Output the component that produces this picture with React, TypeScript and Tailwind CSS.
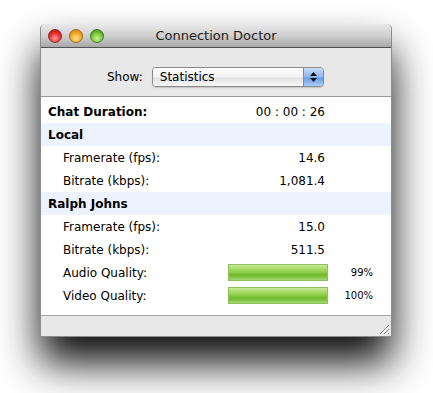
import React from "react";

const font = { fontFamily: '"DejaVu Sans", "Lucida Grande", sans-serif' };

function Bar() {
  return (
    <div className="h-[17px] w-[100px] border border-[#8fbf5a] bg-[linear-gradient(to_bottom,#c6e89a_0%,#a9db6b_25%,#8ccc45_50%,#6fb82c_65%,#86c74a_85%,#a6d977_100%)]" />
  );
}

function Row({
  label,
  value,
  bold,
  indent,
  band,
  bar,
  pct,
}: {
  label: string;
  value?: string;
  bold?: boolean;
  indent?: boolean;
  band?: boolean;
  bar?: boolean;
  pct?: string;
}) {
  return (
    <div
      className={`flex h-[23px] items-center ${band ? "bg-[#edf3fe]" : ""}`}
    >
      <div
        className={`${indent ? "pl-[22px]" : "pl-[7px]"} w-[179px] text-[12px] text-black ${bold ? "font-bold" : ""}`}
      >
        {label}
      </div>
      {value !== undefined && (
        <div className="w-[105px] text-right text-[12px] text-black">{value}</div>
      )}
      {bar && (
        <div className="flex items-center">
          <div className="ml-[8px]">
            <Bar />
          </div>
          <div className="w-[45px] text-right text-[10px] text-black">{pct}</div>
        </div>
      )}
    </div>
  );
}

export default function App() {
  return (
    <div className="h-[393px] w-[433px] bg-white pl-[40px] pt-[24px]" style={font}>
      <div className="flex h-[313px] w-[352px] flex-col rounded-t-[5px] border-x border-b border-[#8c8c8c] bg-[#e8e8e8] shadow-[0_26px_40px_rgba(0,0,0,0.95)]">
        {/* title bar */}
        <div className="relative flex h-[24px] items-center rounded-t-[5px] border-b border-[#515151] bg-[linear-gradient(to_bottom,#e9e9e9,#d0d0d0_50%,#a8a8a8)]">
          <div className="flex gap-[7px] pl-[7px]">
            <div className="h-[14px] w-[14px] rounded-full border border-[#8a2a2a] bg-[radial-gradient(circle_at_50%_70%,#ff9a9a,#e52a2a_55%,#a90f0f)]" />
            <div className="h-[14px] w-[14px] rounded-full border border-[#9a6a1a] bg-[radial-gradient(circle_at_50%_70%,#ffe08a,#f5a623_55%,#c7700d)]" />
            <div className="h-[14px] w-[14px] rounded-full border border-[#3f7a1c] bg-[radial-gradient(circle_at_50%_70%,#c9f58e,#72c23a_55%,#3d8a16)]" />
          </div>
          <div className="absolute inset-0 flex items-center justify-center text-[13px] text-[#1a1a1a]">
            Connection Doctor
          </div>
        </div>
        {/* toolbar */}
        <div className="flex h-[49px] items-center border-b border-[#9a9a9a] pl-[66px] pt-[9px]">
          <span className="mr-[9px] text-[12px] text-black">Show:</span>
          <div className="flex h-[20px] w-[172px] overflow-hidden rounded-[4px] border border-[#8a8a8a] shadow-[0_1px_1px_rgba(0,0,0,0.15)]">
            <div className="flex flex-1 items-center bg-[linear-gradient(to_bottom,#ffffff,#f1f1f1_50%,#e2e2e2_55%,#f7f7f7)] pl-[7px] text-[12px] text-black">
              Statistics
            </div>
            <div className="flex w-[20px] flex-col items-center justify-center gap-[2px] border-l border-[#6f8fc0] bg-[linear-gradient(to_bottom,#c9dcf5,#8fb5ea_50%,#6a9ce4_55%,#a9cdf7)]">
              <svg width="7" height="4" viewBox="0 0 7 4"><path d="M3.5 0L7 4H0z" fill="#111" /></svg>
              <svg width="7" height="4" viewBox="0 0 7 4"><path d="M0 0h7L3.5 4z" fill="#111" /></svg>
            </div>
          </div>
        </div>
        {/* content */}
        <div className="flex-1 bg-white pt-[3px]">
          <Row label="Chat Duration:" value="00 : 00 : 26" bold />
          <Row label="Local" bold band />
          <Row label="Framerate (fps):" value="14.6" indent />
          <Row label="Bitrate (kbps):" value="1,081.4" indent />
          <Row label="Ralph Johns" bold band />
          <Row label="Framerate (fps):" value="15.0" indent />
          <Row label="Bitrate (kbps):" value="511.5" indent />
          <Row label="Audio Quality:" indent bar pct="99%" />
          <Row label="Video Quality:" indent bar pct="100%" />
        </div>
        {/* status bar */}
        <div className="relative h-[21px] border-t border-[#a5a5a5] bg-[#e8e8e8]">
          <svg className="absolute bottom-[1px] right-[1px]" width="12" height="12" viewBox="0 0 12 12">
            <path d="M11 2L2 11M11 6L6 11M11 10L10 11" stroke="#8a8a8a" strokeWidth="1" />
            <path d="M12 3L3 12M12 7L7 12" stroke="#ffffff" strokeWidth="1" />
          </svg>
        </div>
      </div>
    </div>
  );
}
